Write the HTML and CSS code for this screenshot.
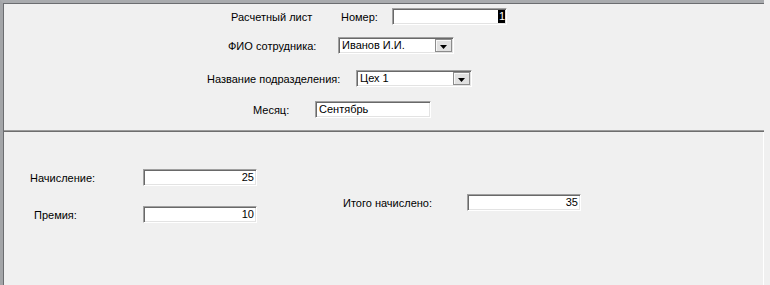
FILE: index.html
```html
<!DOCTYPE html>
<html lang="ru">

<head>
    <meta charset="UTF-8">
    <meta name="viewport" content="width=device-width, initial-scale=1.0">
    <title>Расчетный лист</title>
    <link rel="stylesheet" href="styles.css">
</head>

<body>
    <div class="form-window">
        <div class="form-header">
            <div class="field-row row-number">
                <div class="field-label label-title">Расчетный лист</div>
                <div class="field-label label-number">Номер:</div>
                <div class="text-box box-number"><span class="selected-text">1</span></div>
            </div>
            <div class="field-row row-employee">
                <div class="field-label label-employee">ФИО сотрудника:</div>
                <div class="combo-box">
                    <span class="combo-value">Иванов И.И.</span>
                    <span class="combo-btn">
                        <svg width="7" height="4" viewBox="0 0 7 4"><path d="M0 0H7L3.5 4Z" fill="#000"/></svg>
                    </span>
                </div>
            </div>
            <div class="field-row row-dept">
                <div class="field-label label-dept">Название подразделения:</div>
                <div class="combo-box">
                    <span class="combo-value">Цех 1</span>
                    <span class="combo-btn">
                        <svg width="7" height="4" viewBox="0 0 7 4"><path d="M0 0H7L3.5 4Z" fill="#000"/></svg>
                    </span>
                </div>
            </div>
            <div class="field-row row-month">
                <div class="field-label label-month">Месяц:</div>
                <div class="text-box box-month">Сентябрь</div>
            </div>
        </div>

        <div class="form-divider"></div>

        <div class="form-detail">
            <div class="detail-col">
                <div class="field-row row-accrual">
                    <div class="field-label label-accrual">Начисление:</div>
                    <div class="text-box box-amount">25</div>
                </div>
                <div class="field-row row-bonus">
                    <div class="field-label label-bonus">Премия:</div>
                    <div class="text-box box-amount">10</div>
                </div>
            </div>
            <div class="detail-col col-total">
                <div class="field-row">
                    <div class="field-label label-total">Итого начислено:</div>
                    <div class="text-box box-amount">35</div>
                </div>
            </div>
        </div>
    </div>
</body>

</html>
```

FILE: styles.css
```css
body {
    margin: 0;
    background-color: #f0f0f0;
    font-family: "Liberation Sans", Arial, sans-serif;
    font-size: 11px;
    color: #000;
}

.form-window {
    width: 760px;
    height: 281px;
    border-top: 3px solid #a9abae;
    border-left: 3px solid #a3a5a8;
    box-shadow: inset 1px 1px #6b6d70;
    padding: 1px 0 0 1px;
    display: flex;
    flex-direction: column;
}

.form-header {
    height: 126px;
    display: flex;
    flex-direction: column;
}

.field-row {
    display: flex;
    align-items: center;
    height: 17px;
}

.field-label {
    white-space: nowrap;
}

/* верхняя часть */
.row-number {
    margin-top: 4px;
    margin-left: 227px;
}

.label-title {
    width: 110px;
}

.label-number {
    width: 51px;
}

.row-employee {
    margin-top: 12px;
    margin-left: 224px;
}

.label-employee {
    width: 110px;
}

.row-dept {
    margin-top: 16px;
    margin-left: 203px;
}

.label-dept {
    width: 149px;
}

.row-month {
    margin-top: 14px;
    margin-left: 249px;
}

.label-month {
    width: 62px;
}

.text-box,
.combo-box {
    box-sizing: border-box;
    height: 17px;
    background-color: #fff;
    border: 1px solid;
    border-color: #a0a0a0 #fff #fff #a0a0a0;
    box-shadow: inset 1px 1px #696969, inset -1px -1px #e3e3e3;
    padding: 0 3px;
    line-height: 15px;
    display: flex;
    align-items: center;
}

.box-number {
    width: 115px;
    justify-content: flex-end;
    padding: 1px 1px 1px 3px;
}

.selected-text {
    background-color: #000;
    color: #fff;
    line-height: 13px;
    padding: 0 0 0 1px;
}

.box-month {
    width: 116px;
}

.combo-box {
    width: 116px;
    padding: 1px 1px 1px 3px;
    justify-content: space-between;
}

.combo-btn {
    box-sizing: border-box;
    width: 17px;
    height: 13px;
    background-color: #e1e1e1;
    border: 1px solid #8c8c8c;
    box-shadow: inset 1px 1px #f8f8f8;
    display: flex;
    align-items: flex-end;
    justify-content: center;
    padding-bottom: 2px;
}

.combo-btn svg {
    display: block;
}

.form-divider {
    height: 1px;
    background-color: #9c9c9c;
    border-bottom: 1px solid #6e6e6e;
}

/* нижняя часть */
.form-detail {
    flex: 1;
    border-right: 1px solid #fff;
    display: flex;
    align-items: flex-start;
}

.detail-col {
    display: flex;
    flex-direction: column;
    margin-top: 37px;
    margin-left: 26px;
}

.row-bonus {
    margin-top: 20px;
    margin-left: 4px;
}

.label-accrual {
    width: 113px;
}

.label-bonus {
    width: 109px;
}

.col-total {
    margin-top: 62px;
    margin-left: 86px;
}

.label-total {
    width: 124px;
}

.box-amount {
    width: 114px;
    justify-content: flex-end;
    padding-right: 2px;
}
```
